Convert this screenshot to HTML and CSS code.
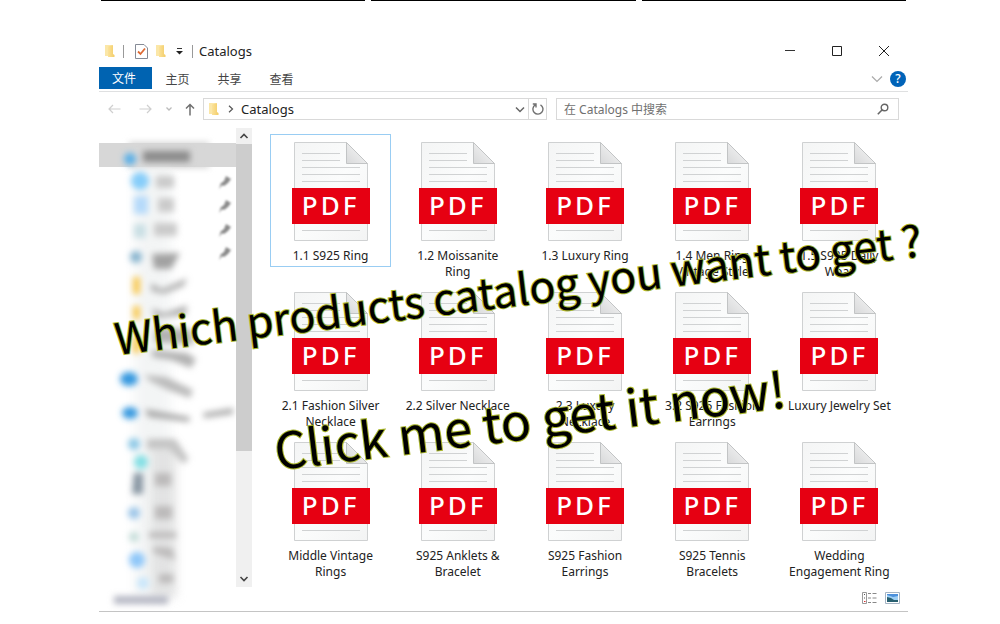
FILE: index.html
```html
<!DOCTYPE html>
<html lang="zh-CN">
<head>
<meta charset="utf-8">
<meta name="viewport" content="width=device-width, initial-scale=1">
<title>Catalogs</title>
<link rel="stylesheet" href="styles.css">
</head>
<body>
<svg class="defs" width="0" height="0" aria-hidden="true">
  <defs>
    <linearGradient id="paper" x1="0" y1="0" x2="1" y2="1"><stop offset="0" stop-color="#f4f5f5"/><stop offset=".5" stop-color="#fbfcfc"/><stop offset="1" stop-color="#f3f4f4"/></linearGradient>
    <linearGradient id="fold" x1="0" y1="1" x2="1" y2="0"><stop offset="0" stop-color="#d8d9da"/><stop offset="1" stop-color="#fafafa"/></linearGradient>
    <linearGradient id="gold" x1="0" y1="0" x2="1" y2="0"><stop offset="0" stop-color="#fbe29a"/><stop offset="1" stop-color="#f3cd68"/></linearGradient>
    <symbol id="doc" viewBox="0 0 78 99">
      <path d="M2.500.5H54.500L75.500 21.500V98.500H2.500Z" fill="url(#paper)" stroke="#cfd1d2"/>
      <path d="M54.500.5L75.500 21.500H54.500Z" fill="url(#fold)" stroke="#c2c4c5"/>
      <path d="M10 11.500H48M10 18.500H48M10 25.500H68M10 32.500H68M10 39.500H68M10 88.500H68" stroke="#d0d2d3"/>
      <path d="M0 46H78V82H0Z" fill="#e60012"/>
    </symbol>
    <symbol id="folder" viewBox="0 0 12 14">
      <path d="M1 1H8V12H1Z" fill="#fbe7a8"/><path d="M4 2.500L9 1V10L10.500 11V13H4Z" fill="url(#gold)"/>
    </symbol>
  </defs>
</svg>

<div class="strips" aria-hidden="true"><span></span><span></span><span></span></div>

<main class="window">
  <header class="titlebar">
    <svg class="folder" aria-hidden="true"><use href="#folder"/></svg>
    <span class="divider first"></span>
    <button class="bare props" aria-label="Properties"><svg width="13" height="15" viewBox="0 0 13 15"><path d="M.5.5H9L12.500 4V14.500H.5Z" fill="#fff" stroke="#858b96"/><path d="M3 7.500L5.500 10L10 4.500" fill="none" stroke="#dd6a34" stroke-width="1.800"/></svg></button>
    <button class="bare newfolder" aria-label="New folder"><svg class="folder"><use href="#folder"/></svg></button>
    <button class="bare" aria-label="Customize toolbar"><svg width="7" height="7" viewBox="0 0 7 7"><path d="M1 .5H6" stroke="#333"/><path d="M0 3H7L3.500 6.500Z" fill="#222"/></svg></button>
    <span class="divider second"></span>
    <h1>Catalogs</h1>
    <div class="controls">
      <button class="bare" aria-label="Minimize"><svg width="12" height="12" viewBox="0 0 12 12"><path d="M1 5.500H11" stroke="#333"/></svg></button>
      <button class="bare" aria-label="Maximize"><svg width="12" height="12" viewBox="0 0 12 12"><path d="M1.500 1.500H10.500V10.500H1.500Z" fill="none" stroke="#222"/></svg></button>
      <button class="bare" aria-label="Close"><svg width="12" height="12" viewBox="0 0 12 12"><path d="M1 1L11 11M11 1L1 11" stroke="#222"/></svg></button>
    </div>
  </header>

  <nav class="ribbon">
    <button class="tab file">文件</button><button class="tab">主页</button><button class="tab">共享</button><button class="tab">查看</button>
    <div class="ribbon-end">
      <button class="bare" aria-label="Expand ribbon"><svg width="12" height="8" viewBox="0 0 12 8"><path d="M1 1.500L6 6.500L11 1.500" fill="none" stroke="#aaa" stroke-width="1.200"/></svg></button>
      <button class="help" aria-label="Help">?</button>
    </div>
  </nav>

  <div class="navrow">
    <div class="arrows">
      <button class="bare" aria-label="Back"><svg width="13" height="10" viewBox="0 0 13 10"><path d="M12.500 5H1M5 1L1 5L5 9" fill="none" stroke="#cfcfcf" stroke-width="1.200"/></svg></button>
      <button class="bare" aria-label="Forward"><svg width="13" height="10" viewBox="0 0 13 10"><path d="M.5 5H12M8 1L12 5L8 9" fill="none" stroke="#cfcfcf" stroke-width="1.200"/></svg></button>
      <button class="bare recent" aria-label="Recent"><svg width="6" height="6" viewBox="0 0 6 6"><path d="M.5 1.500L3 4L5.500 1.500" fill="none" stroke="#bbb" stroke-width="1.300"/></svg></button>
      <button class="bare up" aria-label="Up"><svg width="10" height="13" viewBox="0 0 10 13"><path d="M5 12.500V1.500M1 5.500L5 1.500L9 5.500" fill="none" stroke="#707070" stroke-width="1.500"/></svg></button>
    </div>
    <div class="address">
      <svg class="folder" aria-hidden="true"><use href="#folder"/></svg>
      <svg class="crumb" width="6" height="8" viewBox="0 0 6 8" aria-hidden="true"><path d="M1 .8L4.500 4L1 7.200" fill="none" stroke="#555" stroke-width="1.200"/></svg>
      <span class="path">Catalogs</span>
      <button class="bare" aria-label="Previous locations"><svg width="10" height="7" viewBox="0 0 10 7"><path d="M1 1.500L5 5.500L9 1.500" fill="none" stroke="#666" stroke-width="1.500"/></svg></button>
      <button class="bare refresh" aria-label="Refresh"><svg width="12" height="12" viewBox="0 0 12 12"><path d="M8.500 1.800A5 5 0 1 1 3.200 1.900M.8 1H4V4.500" fill="none" stroke="#707070" stroke-width="1.400"/></svg></button>
    </div>
    <label class="search">
      <input type="search" placeholder="在 Catalogs 中搜索" aria-label="在 Catalogs 中搜索">
      <svg width="12" height="12" viewBox="0 0 12 12" aria-hidden="true"><circle cx="7.500" cy="4.500" r="3.300" fill="none" stroke="#666" stroke-width="1.400"/><path d="M5 7L.8 11.200" stroke="#666" stroke-width="1.600"/></svg>
    </label>
  </div>

  <div class="body">
    <aside class="tree">
      <svg width="137" height="484" viewBox="0 0 137 484" aria-hidden="true">
        <defs>
          <filter id="soft" x="-50%" y="-50%" width="200%" height="200%"><feGaussianBlur stdDeviation="3"/></filter>
          <filter id="haze" x="-50%" y="-50%" width="200%" height="200%"><feGaussianBlur stdDeviation="5"/></filter>
          <filter id="fine" x="-50%" y="-50%" width="200%" height="200%"><feGaussianBlur stdDeviation="1"/></filter>
        </defs>
        <path d="M0 15H137V39H0Z" fill="#d7d7d7"/>
        <path d="M30 14H110V40H30Z" fill="#d7d7d7" filter="url(#soft)"/>
        <path d="M35 40H72V470H35Z" fill="#e9eced" opacity=".5" filter="url(#haze)"/>
        <path d="M52 316H78V470H52Z" fill="#d8d8d8" opacity=".6" filter="url(#haze)"/>
        <g filter="url(#soft)">
          <circle cx="31" cy="31" r="6" fill="#54aee8"/><path d="M44 23H91V34H44Z" fill="#8b8b8b"/>
          <circle cx="41" cy="53" r="9" fill="#85cdfa"/><path d="M57 48H75V60H57ZM59 70H75V84H59ZM55 95H78V108H55Z" fill="#cacaca"/>
          <path d="M35 68H49V86H35Z" fill="#b5dafa"/><path d="M35 96H47V110H35Z" fill="#c9dfe4"/>
          <circle cx="37" cy="129" r="6" fill="#86b3ce"/><path d="M53 126L81 125L72 141H55Z" fill="#a2a2a2"/>
          <path d="M34 149H41V166H34ZM34 178H41V191H34ZM34 208H41V225H34Z" fill="#f8c850"/>
          <path d="M52 155L63 161L88 150L85 158L65 166L52 163ZM53 180L65 185L88 177L87 187L56 190ZM57 200L92 201L95 217L55 214ZM53 222L88 225L97 231L92 240L72 232L53 229Z" fill="#b2b2b2"/>
          <ellipse cx="30" cy="251" rx="9" ry="7" fill="#3598df"/><path d="M45 247L67 249L94 262L91 270L69 262L51 253Z" fill="#bbb"/>
          <ellipse cx="31" cy="285" rx="8" ry="6" fill="#3598df"/><path d="M46 281L91 289L90 294L49 289ZM104 285L134 280V286L105 290Z" fill="#aaa"/>
          <circle cx="35" cy="316" r="6" fill="#8bc8e6"/><path d="M48 311H76L90 331L84 336L70 321H48Z" fill="#c4c4c4"/>
          <circle cx="42" cy="334" r="7" fill="#82dfe4"/><path d="M35 345H44V366H33Z" fill="#8795a2"/><path d="M56 345H72V358H56ZM56 378H73V391H56ZM50 404H77V410H50ZM54 419L73 420L76 432L55 425ZM60 446H74V455H60Z" fill="#bcbaba"/>
          <circle cx="35" cy="385" r="6" fill="#9ac4e8"/><circle cx="35" cy="409" r="5" fill="#c3dcd8"/><circle cx="38" cy="432" r="8" fill="#8fc7f9"/><circle cx="44" cy="455" r="6" fill="#c8e6fb"/>
          <path d="M15 468H69V476H15Z" fill="#b4b6c2"/>
        </g>
        <g fill="#8a8a8a" filter="url(#fine)">
          <path id="pin" d="M127 48L132 51L129 55L125 58L121 56L125 53ZM124 56L120 61L122 55Z"/><use href="#pin" y="24"/><use href="#pin" y="48"/><use href="#pin" y="71"/>
        </g>
      </svg>
    </aside>
    <div class="scrollbar">
      <button class="bare" aria-label="Scroll up"><svg width="10" height="8" viewBox="0 0 10 8"><path d="M1.500 6L5 2.500L8.500 6" fill="none" stroke="#444" stroke-width="1.600"/></svg></button>
      <div class="track"><div class="thumb"></div></div>
      <button class="bare" aria-label="Scroll down"><svg width="10" height="8" viewBox="0 0 10 8"><path d="M1.500 2L5 5.500L8.500 2" fill="none" stroke="#444" stroke-width="1.600"/></svg></button>
    </div>
    <div class="pane">
      <ul class="files">
        <li class="item selected"><div class="thumbnail"><svg><use href="#doc"/></svg><b>PDF</b></div><span>1.1 S925 Ring</span></li>
        <li class="item"><div class="thumbnail"><svg><use href="#doc"/></svg><b>PDF</b></div><span>1.2 Moissanite Ring</span></li>
        <li class="item"><div class="thumbnail"><svg><use href="#doc"/></svg><b>PDF</b></div><span>1.3 Luxury Ring</span></li>
        <li class="item"><div class="thumbnail"><svg><use href="#doc"/></svg><b>PDF</b></div><span>1.4 Men Ring Vintage Style</span></li>
        <li class="item"><div class="thumbnail"><svg><use href="#doc"/></svg><b>PDF</b></div><span>1.5 S925 Daily<br>Wear</span></li>
        <li class="item"><div class="thumbnail"><svg><use href="#doc"/></svg><b>PDF</b></div><span>2.1 Fashion Silver Necklace</span></li>
        <li class="item"><div class="thumbnail"><svg><use href="#doc"/></svg><b>PDF</b></div><span>2.2 Silver Necklace</span></li>
        <li class="item"><div class="thumbnail"><svg><use href="#doc"/></svg><b>PDF</b></div><span>2.3 Luxury<br>Necklace</span></li>
        <li class="item"><div class="thumbnail"><svg><use href="#doc"/></svg><b>PDF</b></div><span>3.2 S925 Fashion Earrings</span></li>
        <li class="item"><div class="thumbnail"><svg><use href="#doc"/></svg><b>PDF</b></div><span>Luxury Jewelry Set</span></li>
        <li class="item"><div class="thumbnail"><svg><use href="#doc"/></svg><b>PDF</b></div><span>Middle Vintage Rings</span></li>
        <li class="item"><div class="thumbnail"><svg><use href="#doc"/></svg><b>PDF</b></div><span>S925 Anklets &amp; Bracelet</span></li>
        <li class="item"><div class="thumbnail"><svg><use href="#doc"/></svg><b>PDF</b></div><span>S925 Fashion Earrings</span></li>
        <li class="item"><div class="thumbnail"><svg><use href="#doc"/></svg><b>PDF</b></div><span>S925 Tennis Bracelets</span></li>
        <li class="item"><div class="thumbnail"><svg><use href="#doc"/></svg><b>PDF</b></div><span>Wedding Engagement Ring</span></li>
      </ul>
    </div>
  </div>

  <footer class="status">
    <button class="bare" aria-label="Details view"><svg width="15" height="12" viewBox="0 0 15 12"><path d="M.5.5H4.500V11.500H.5Z" fill="#fff" stroke="#999"/><path d="M2 2.500H3M2 6H3" stroke="#555"/><path d="M2 9.500H3.500" stroke="#d33"/><path d="M6 1.500H9M10.500 1.500H14.500M6 6H9M10.500 6H14.500M6 10.500H9M10.500 10.500H14.500" stroke="#888"/></svg></button>
    <button class="bare" aria-label="Large icons view"><svg width="15" height="12" viewBox="0 0 15 12"><path d="M.5.5H14.500V11.500H.5Z" fill="#fff" stroke="#a5b4c4"/><path d="M2 2H13V10H2Z" fill="#9fd0f5"/><path d="M2 2H13V4L8 5L2 3Z" fill="#4d91dc"/><path d="M2 5L6 6L9 8L13 8V10H2Z" fill="#286070"/></svg></button>
  </footer>
</main>

<p class="slogan question"><span>Which</span> <span>products</span> <span>catalog</span> <span>you</span> <span>want</span> <span>to</span> <span>get</span> <span>?</span></p>
<p class="slogan action">Click me to get it now!</p>
</body>
</html>
```

FILE: styles.css
```css
* { box-sizing: border-box; }
body {
  position: relative;
  margin: 0;
  padding: 0 92px 0 99px;
  background: #fff;
  color: #222;
  font-family: "Noto Sans", "Noto Sans CJK SC", sans-serif;
  font-size: 12px;
  line-height: 16px;
}
svg { display: block; }
.defs { position: absolute; }
.bare { display: flex; padding: 0; border: 0; background: none; }

.strips { display: flex; gap: 6px; padding: 0 2px; }
.strips span { flex: 1; height: 1px; background: #000; }

.window { margin-top: 36px; border-bottom: 1px solid #c4c4c4; }
.folder { width: 12px; height: 14px; }

.titlebar { display: flex; align-items: center; height: 28px; padding-left: 5px; }
.divider { width: 1px; height: 13px; background: #999; }
.divider.first { margin: 0 11px 0 7px; }
.divider.second { margin: 0 6px 0 9px; }
.props { margin-right: 7px; }
.newfolder { margin-right: 9px; }
.titlebar h1 { margin: 0; font-size: 13px; font-weight: 400; }
.controls { display: flex; gap: 35px; margin-left: auto; padding-right: 18px; }

.ribbon { display: flex; align-items: flex-start; height: 27px; padding-top: 2px; border-bottom: 1px solid #dfe0e1; }
.tab {
  width: 52px;
  height: 22px;
  padding: 1px 1px 0 0;
  border: 0;
  background: none;
  color: #444;
  font-family: "Noto Sans CJK SC", sans-serif;
  font-size: 12px;
  line-height: 22px;
}
.tab.file { width: 53px; padding: 0 3px 0 0; background: #0063b1; color: #fff; }
.ribbon-end { display: flex; align-items: center; gap: 7px; height: 23px; margin-left: auto; padding-right: 2px; }
.help { width: 16px; height: 16px; padding: 0; border: 0; border-radius: 50%; background: #0063b8; color: #fff; font: 500 12px/16px "Noto Sans", sans-serif; }

.navrow { display: grid; grid-template-columns: 95px 1fr 1fr; align-items: center; height: 34px; padding: 0 9px; }
.arrows { display: flex; align-items: center; }
.arrows .bare { margin-right: 18px; }
.arrows .recent { margin: 0 13px 0 -4px; }
.arrows .up { margin: 0; }
.address, .search { display: flex; align-items: center; height: 22px; border: 1px solid #d9d9d9; }
.address { margin-right: 4px; padding-left: 4px; }
.address .crumb { margin: 0 7px 0 8px; }
.path { flex: 1; padding-bottom: 1px; font-size: 13px; }
.refresh { align-items: center; justify-content: center; width: 18px; height: 20px; margin-left: 3px; border-left: 1px solid #d9d9d9; }
.search { margin-left: 5px; padding: 0 9px 0 7px; }
.search input { flex: 1; min-width: 0; padding: 1px 0 0; border: 0; outline: 0; background: none; color: #666; font: 12px/16px "Noto Sans", "Noto Sans CJK SC", sans-serif; }
.search input::placeholder { color: #707070; opacity: 1; }

.body { display: flex; margin-top: 2px; }
.tree { width: 137px; height: 459px; }
.tree svg { overflow: visible; }
.scrollbar { display: flex; flex-direction: column; width: 16px; background: #f0f0f0; }
.scrollbar .bare { align-items: center; justify-content: center; height: 16px; }
.track { flex: 1; }
.thumb { height: 72%; background: #cdcdcd; }
.pane { flex: 1; padding: 6px 8px 0 18px; }

.files { display: grid; grid-template-columns: repeat(5, 1fr); grid-auto-rows: minmax(150px, auto); column-gap: 6px; align-items: start; margin: 0; padding: 0; list-style: none; }
.item { display: flex; flex-direction: column; align-items: center; gap: 7px; padding: 7px 6px 2px; border: 1px solid transparent; text-align: center; }
.item.selected { border-color: #99cdf3; }
.item > span { color: #222; font-size: 12px; }
.thumbnail { display: grid; width: 78px; height: 99px; }
.thumbnail svg { grid-area: 1 / 1; width: 78px; height: 99px; }
.thumbnail b { grid-area: 1 / 1; padding-top: 45px; color: #fff; font-size: 26px; font-weight: 500; line-height: 36px; letter-spacing: 3px; }

.status { display: flex; justify-content: flex-end; gap: 8px; height: 24px; padding: 5px 8px 0 0; }

.slogan {
  position: absolute;
  margin: 0;
  color: #000;
  font-family: "Noto Sans CJK SC", sans-serif;
  line-height: 60px;
  white-space: nowrap;
  transform-origin: 0 100%;
  transform: rotate(-7deg);
  -webkit-text-stroke: 2px #a9b62c;
  paint-order: stroke fill;
}
.question { display: flex; gap: 9px; left: 118px; top: 306px; font-size: 43px; }
.action { left: 278px; top: 418px; font-size: 50px; }
```
